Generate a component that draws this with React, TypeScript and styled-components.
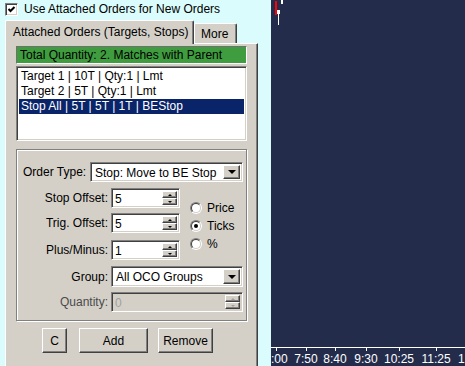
import React from "react";
import styled, { createGlobalStyle, css } from "styled-components";

const GlobalStyle = createGlobalStyle`
  *, *::before, *::after { box-sizing: border-box; }
  html, body { margin: 0; padding: 0; }
  body {
    font-family: "Liberation Sans", Arial, sans-serif;
    font-size: 12px;
    color: #000;
  }
`;

const raised = css`
  border: 1px solid;
  border-color: #fff #404040 #404040 #fff;
  box-shadow: inset -1px -1px #808080;
`;

const sunken = css`
  border: 1px solid;
  border-color: #808080 #fff #fff #808080;
  box-shadow: inset 1px 1px #404040, inset -1px -1px #d4d0c8;
`;

const Screen = styled.div`
  display: flex;
  width: 465px;
  height: 366px;
  overflow: hidden;
  background: #dbfcfc;
`;

const LeftPane = styled.div`
  width: 271px;
  display: flex;
  flex-direction: column;
  padding: 2px 0 0 5px;
`;

const CheckRow = styled.label`
  display: flex;
  align-items: center;
  height: 14px;
  gap: 6px;
`;

const CheckBox = styled.span`
  width: 13px;
  height: 13px;
  background: #fff;
  display: flex;
  ${sunken};
`;

const Tabs = styled.div`
  margin-top: 4px;
  flex: 1;
  display: flex;
  flex-direction: column;
  width: 253px;
`;

const TabStrip = styled.div`
  display: flex;
  align-items: flex-end;
  height: 23px;
  position: relative;
  z-index: 1;
`;

const Tab = styled.div<{ $active?: boolean; $w: number }>`
  width: ${(p) => p.$w}px;
  height: ${(p) => (p.$active ? 24 : 20)}px;
  margin-bottom: ${(p) => (p.$active ? -1 : 0)}px;
  padding: ${(p) => (p.$active ? "4px 0 0 7px" : "3px 0 0 6px")};
  background: #d4d0c8;
  border-top: 1px solid #fff;
  border-left: 1px solid #fff;
  border-right: 1px solid #404040;
  box-shadow: inset -1px 0 #808080;
  border-radius: 2px 2px 0 0;
  white-space: nowrap;
`;

const TabPage = styled.div`
  flex: 1;
  display: flex;
  flex-direction: column;
  background: #d4d0c8;
  border-top: 1px solid #fff;
  border-left: 1px solid #fff;
  border-right: 1px solid #404040;
  box-shadow: inset -1px 0 #808080;
  padding: 2px 10px 0 10px;
`;

const StatusBar = styled.div`
  height: 18px;
  background: #3f9c3f;
  border: 1px solid;
  border-color: #707070 #fff #fff #707070;
  padding: 1px 0 0 3px;
  white-space: nowrap;
`;

const ListBox = styled.div`
  margin-top: 2px;
  height: 75px;
  background: #fff;
  padding: 2px;
  ${sunken};
`;

const ListItem = styled.div<{ $selected?: boolean }>`
  height: 15px;
  line-height: 15px;
  padding-left: 2px;
  white-space: nowrap;
  background: ${(p) => (p.$selected ? "#0a246a" : "transparent")};
  color: ${(p) => (p.$selected ? "#fff" : "#000")};
`;

const GroupBox = styled.div`
  margin-top: 8px;
  height: 172px;
  border: 1px solid #808080;
  box-shadow: inset 1px 1px #fff, 1px 1px #fff;
  padding: 12px 0 0 6px;
  display: flex;
  flex-direction: column;
`;

const Row = styled.div<{ $top?: number }>`
  display: flex;
  align-items: center;
  gap: 3px;
  margin-top: ${(p) => p.$top ?? 0}px;
`;

const FieldLabel = styled.span<{ $w: number; $align?: string; $disabled?: boolean }>`
  width: ${(p) => p.$w}px;
  text-align: ${(p) => p.$align ?? "right"};
  white-space: nowrap;
  color: ${(p) => (p.$disabled ? "#4a4a4a" : "#000")};
`;

const Combo = styled.div<{ $w: number; $h?: number }>`
  width: ${(p) => p.$w}px;
  height: ${(p) => p.$h ?? 20}px;
  background: #fff;
  padding: 2px;
  display: flex;
  align-items: stretch;
  ${sunken};
`;

const ComboText = styled.span`
  flex: 1;
  padding: 1px 0 0 2px;
  white-space: nowrap;
`;

const DropButton = styled.span`
  width: 17px;
  flex-shrink: 0;
  background: #d4d0c8;
  display: flex;
  align-items: center;
  justify-content: center;
  ${raised};
`;

const Arrow = styled.span<{ $dir: "up" | "down"; $size: number; $color?: string }>`
  width: 0;
  height: 0;
  border-left: ${(p) => p.$size}px solid transparent;
  border-right: ${(p) => p.$size}px solid transparent;
  ${(p) =>
    p.$dir === "down"
      ? `border-top: ${p.$size}px solid ${p.$color ?? "#000"};`
      : `border-bottom: ${p.$size}px solid ${p.$color ?? "#000"};`}
`;

const Spin = styled.div<{ $w: number; $disabled?: boolean }>`
  width: ${(p) => p.$w}px;
  height: 20px;
  background: ${(p) => (p.$disabled ? "#d4d0c8" : "#fff")};
  color: ${(p) => (p.$disabled ? "#a0a0a0" : "#000")};
  padding: 2px;
  display: flex;
  ${sunken};
`;

const SpinText = styled.span`
  flex: 1;
  padding: 1px 0 0 1px;
`;

const SpinButtons = styled.span`
  width: 15px;
  display: flex;
  flex-direction: column;
`;

const SpinButton = styled.span`
  flex: 1;
  background: #d4d0c8;
  display: flex;
  align-items: center;
  justify-content: center;
  ${raised};
`;

const OffsetBlock = styled.div`
  display: flex;
  align-items: center;
  gap: 10px;
`;

const SpinColumn = styled.div`
  display: flex;
  flex-direction: column;
`;

const RadioColumn = styled.div`
  display: flex;
  flex-direction: column;
  gap: 5px;
  padding-top: 9px;
`;

const RadioRow = styled.div`
  display: flex;
  align-items: center;
  gap: 5px;
  height: 13px;
`;

const RadioOuter = styled.span`
  width: 12px;
  height: 12px;
  border-radius: 50%;
  border: 1px solid;
  border-color: #808080 #fff #fff #808080;
  display: flex;
`;

const RadioInner = styled.span<{ $checked?: boolean }>`
  flex: 1;
  border-radius: 50%;
  border: 1px solid;
  border-color: #404040 #d4d0c8 #d4d0c8 #404040;
  background: #fff;
  display: flex;
  align-items: center;
  justify-content: center;

  &::after {
    content: "";
    width: 4px;
    height: 4px;
    border-radius: 50%;
    background: ${(p) => (p.$checked ? "#000" : "transparent")};
  }
`;

const ButtonRow = styled.div`
  display: flex;
  margin: 7px 0 0 26px;
`;

const Button = styled.div<{ $w: number; $gap?: number }>`
  width: ${(p) => p.$w}px;
  height: 25px;
  margin-left: ${(p) => p.$gap ?? 0}px;
  display: flex;
  align-items: center;
  justify-content: center;
  background: #d4d0c8;
  ${raised};
`;

const Chart = styled.div`
  flex: 1;
  display: flex;
  flex-direction: column;
  background: #242c4b;
  overflow: hidden;
`;

const Plot = styled.div`
  height: 348px;
  position: relative;
  border-bottom: 1px solid #fff;
`;

const Bar = styled.span<{ $color: string }>`
  position: absolute;
  background: ${(p) => p.$color};
`;

const Axis = styled.div`
  flex: 1;
  position: relative;
  color: #fff;
`;

const Tick = styled.span`
  position: absolute;
  top: 0;
  width: 1px;
  height: 3px;
  background: #fff;
`;

const TickLabel = styled.span<{ $edge?: boolean }>`
  position: absolute;
  top: 4px;
  transform: ${(p) => (p.$edge ? "none" : "translateX(-50%)")};
  white-space: nowrap;
`;

const Spinner = ({ value, w, disabled }: { value: string; w: number; disabled?: boolean }) => {
  const c = disabled ? "#a0a0a0" : "#000";
  return (
    <Spin $w={w} $disabled={disabled}>
      <SpinText>{value}</SpinText>
      <SpinButtons>
        <SpinButton>
          <Arrow $dir="up" $size={2} $color={c} />
        </SpinButton>
        <SpinButton>
          <Arrow $dir="down" $size={2} $color={c} />
        </SpinButton>
      </SpinButtons>
    </Spin>
  );
};

const Radio = ({ label, checked }: { label: string; checked?: boolean }) => (
  <RadioRow>
    <RadioOuter>
      <RadioInner $checked={checked} />
    </RadioOuter>
    {label}
  </RadioRow>
);

const orders = [
  "Target 1 | 10T | Qty:1 | Lmt",
  "Target 2 | 5T | Qty:1 | Lmt",
  "Stop All | 5T | 5T | 1T | BEStop",
];

// axis labels, x relative to the chart's left edge
const ticks = [
  { x: 35, t: "7:50" },
  { x: 64, t: "8:40" },
  { x: 95, t: "9:30" },
  { x: 128, t: "10:25" },
  { x: 165, t: "11:25" },
];

export default function App() {
  return (
    <>
      <GlobalStyle />
      <Screen>
        <LeftPane>
          <CheckRow>
            <CheckBox>
              <svg width="11" height="11" viewBox="0 0 11 11">
                <path d="M2.5 5 L4.5 7 L8.5 3" stroke="#000" strokeWidth="2" fill="none" />
              </svg>
            </CheckBox>
            Use Attached Orders for New Orders
          </CheckRow>
          <Tabs>
            <TabStrip>
              <Tab $active $w={189}>Attached Orders (Targets, Stops)</Tab>
              <Tab $w={43}>More</Tab>
            </TabStrip>
            <TabPage>
              <StatusBar>Total Quantity: 2. Matches with Parent</StatusBar>
              <ListBox>
                {orders.map((o, i) => (
                  <ListItem key={o} $selected={i === 2}>
                    {o}
                  </ListItem>
                ))}
              </ListBox>
              <GroupBox>
                <Row>
                  <FieldLabel $w={64} $align="left">Order Type:</FieldLabel>
                  <Combo $w={153}>
                    <ComboText>Stop: Move to BE Stop</ComboText>
                    <DropButton>
                      <Arrow $dir="down" $size={4} />
                    </DropButton>
                  </Combo>
                </Row>
                <OffsetBlock>
                  <SpinColumn>
                    <Row $top={6}>
                      <FieldLabel $w={85}>Stop Offset:</FieldLabel>
                      <Spinner value="5" w={69} />
                    </Row>
                    <Row $top={5}>
                      <FieldLabel $w={85}>Trig. Offset:</FieldLabel>
                      <Spinner value="5" w={69} />
                    </Row>
                    <Row $top={7}>
                      <FieldLabel $w={85}>Plus/Minus:</FieldLabel>
                      <Spinner value="1" w={69} />
                    </Row>
                  </SpinColumn>
                  <RadioColumn>
                    <Radio label="Price" />
                    <Radio label="Ticks" checked />
                    <Radio label="%" />
                  </RadioColumn>
                </OffsetBlock>
                <Row $top={6}>
                  <FieldLabel $w={85}>Group:</FieldLabel>
                  <Combo $w={132} $h={21}>
                    <ComboText>All OCO Groups</ComboText>
                    <DropButton>
                      <Arrow $dir="down" $size={4} />
                    </DropButton>
                  </Combo>
                </Row>
                <Row $top={5}>
                  <FieldLabel $w={85} $disabled>Quantity:</FieldLabel>
                  <Spinner value="0" w={132} disabled />
                </Row>
              </GroupBox>
              <ButtonRow>
                <Button $w={25}>C</Button>
                <Button $w={69} $gap={12}>Add</Button>
                <Button $w={55} $gap={10}>Remove</Button>
              </ButtonRow>
            </TabPage>
          </Tabs>
        </LeftPane>
        <Chart>
          <Plot>
            <Bar $color="#ff0000" style={{ left: 4, top: 1, width: 2, height: 14 }} />
            <Bar $color="#ffffff" style={{ left: 10, top: 0, width: 2, height: 4 }} />
            <Bar $color="#ffffff" style={{ left: 6, top: 10, width: 3, height: 4 }} />
            <Bar $color="#ffffff" style={{ left: 7, top: 14, width: 1, height: 11 }} />
          </Plot>
          <Axis>
            <Tick style={{ left: 5 }} />
            <TickLabel $edge style={{ left: 0 }}>:00</TickLabel>
            {ticks.map((k) => (
              <React.Fragment key={k.t}>
                <Tick style={{ left: k.x }} />
                <TickLabel style={{ left: k.x }}>{k.t}</TickLabel>
              </React.Fragment>
            ))}
            <Tick style={{ left: 203 }} />
            <TickLabel $edge style={{ left: 187 }}>12</TickLabel>
          </Axis>
        </Chart>
      </Screen>
    </>
  );
}
